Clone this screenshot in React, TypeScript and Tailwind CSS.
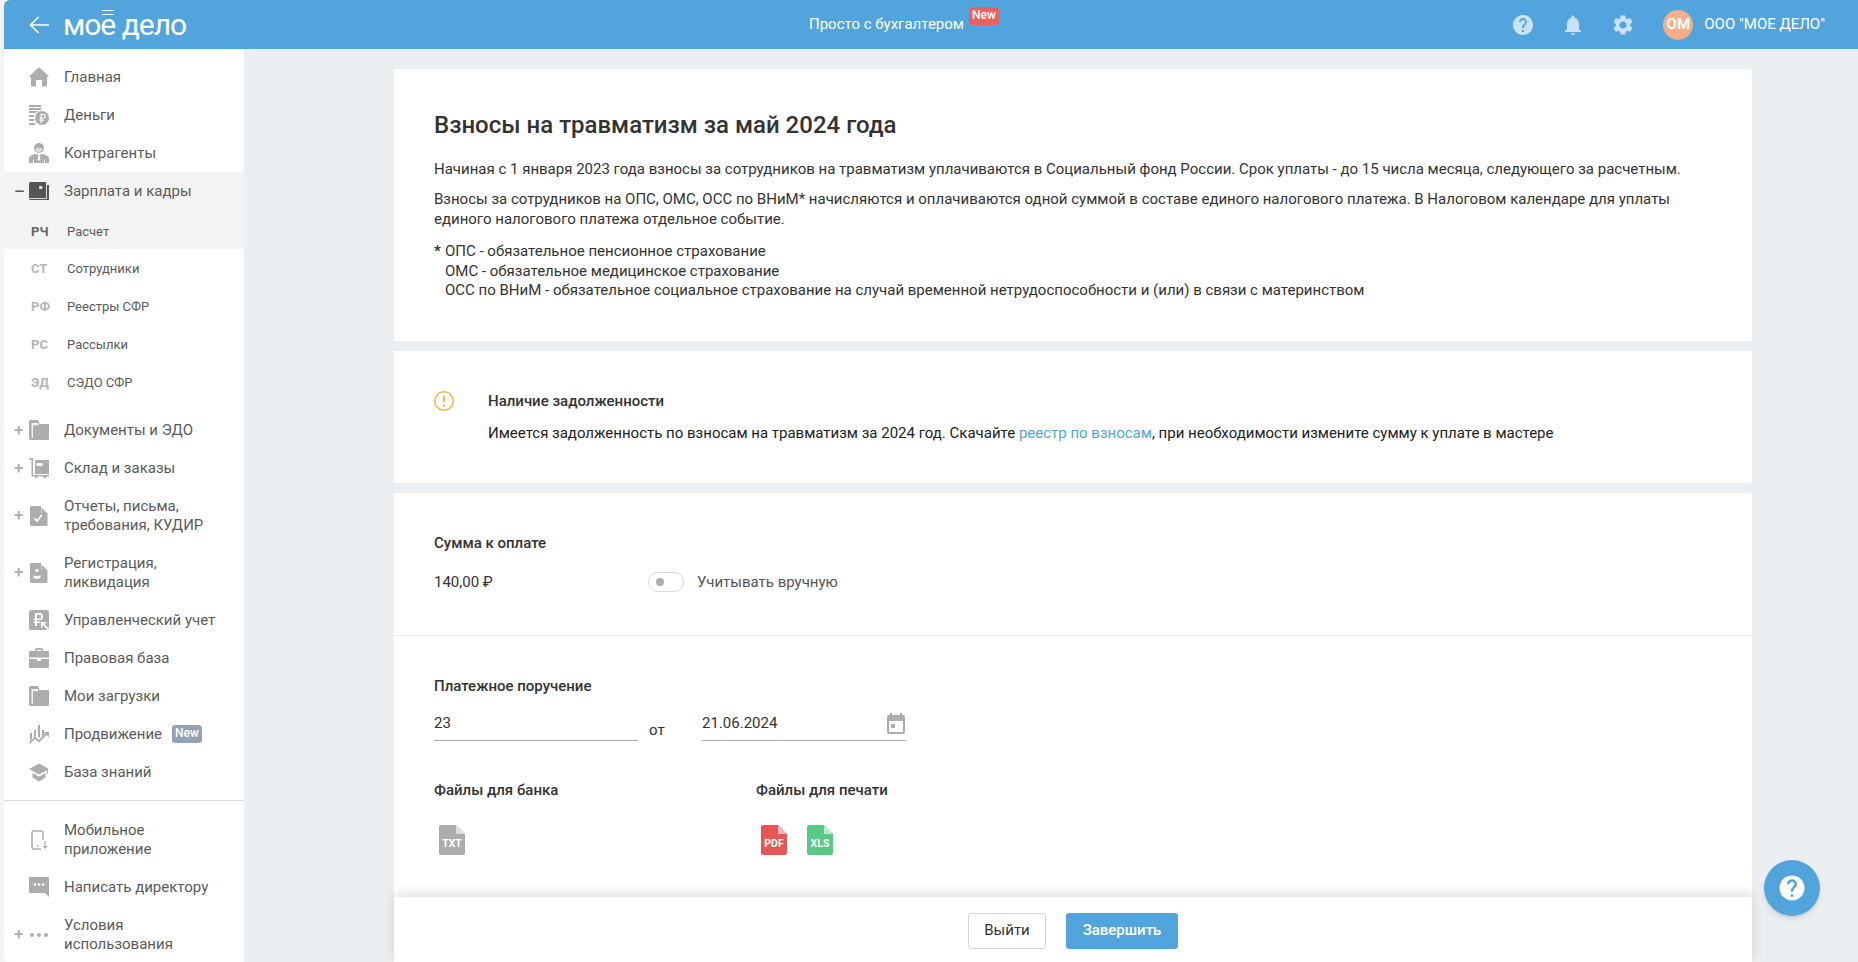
import React from 'react';

const gray = '#adadad';

const Ico = ({ children, size = 20, color = gray }: { children: React.ReactNode; size?: number; color?: string }) => (
  <svg width={size} height={size} viewBox="0 0 20 20" fill={color}>
    {children}
  </svg>
);

const HomeIcon = () => (
  <Ico><path d="M9 1a1.500 1.500 0 0 1 2 0l8.500 8a.6.6 0 0 1-.4 1H18v8.500a1 1 0 0 1-1 1h-4V13H7v6.500H3a1 1 0 0 1-1-1V10H.9a.6.6 0 0 1-.4-1z" /></Ico>
);
const MoneyIcon = () => (
  <Ico>
    <path d="M0 0h12v2H0zM0 3h12v2H0zM0 6h9v2H0zM0 10h5v2H0zM0 14h5v2H0zM0 18h6v2H0z" />
    <circle cx="13" cy="13" r="8" fill="#fff" />
    <circle cx="13" cy="13" r="7" />
    <path d="M11.500 9h3.100a2.300 2.300 0 0 1 0 4.600h-2v1h2.500v1.100h-2.500V18h-1.100v-2.300h-1v-1.100h1v-1h-1v-1h1zm1.100 1.100v2.500h1.900a1.250 1.250 0 0 0 0-2.500z" fill="#fff" />
  </Ico>
);
const PersonIcon = () => (
  <Ico>
    <circle cx="10" cy="5" r="5" />
    <path d="M6.300 5.500c1.500-1 6-1 7.400 0-.3 2.500-2 3.500-3.700 3.500S6.600 8 6.300 5.500z" fill="#dcdcdc" />
    <path d="M0 20v-4.500C0 13 3 11.800 7 11l3 1 3-1c4 .8 7 2 7 4.500V20z" />
    <path d="M8.800 12.500h2.400l-.3 1.500.6 3.500H8.500l.6-3.500z" fill="#fff" />
    <path d="M4 16.500h1V20H4zM15 16.500h1V20h-1z" fill="#fff" />
  </Ico>
);
const WalletIcon = () => (
  <Ico color="#555">
    <path d="M1.500 1H17v3h3v15H1.500A1.500 1.500 0 0 1 0 17.500v-15A1.500 1.500 0 0 1 1.500 1z" />
    <rect x="10" y="5" width="3.500" height="3" rx="1.300" fill="#e4e4e4" />
    <path d="M0 17h18v.9H0zM17 4h1v13.500h-1z" fill="#d8d8d8" />
  </Ico>
);
const FolderIcon = () => (
  <Ico>
    <path d="M1.500 0H9l1.500 4H20v14.500a1.500 1.500 0 0 1-1.500 1.500h-17A1.500 1.500 0 0 1 0 18.500v-17A1.500 1.500 0 0 1 1.500 0z" />
    <path d="M2.500 3h6.300l1 2.200H4V18H2.500z" fill="#f2f2f2" />
  </Ico>
);
const StockIcon = () => (
  <Ico>
    <path d="M0 0h4v17h16v1.500h-3V20h-2.500v-1.500h-6V20H6v-1.500H2.500v-17H0z" />
    <path d="M6 2h14v14H6z" />
    <path d="M7.500 5h6v3h-6z" fill="#fff" />
  </Ico>
);
const DocCheckIcon = () => (
  <Ico>
    <path d="M2.500 0H12l6.500 6.500v12a1.500 1.500 0 0 1-1.500 1.500H2.500A1.500 1.500 0 0 1 1 18.500v-17A1.500 1.500 0 0 1 2.500 0z" />
    <path d="M12 0h7v7h-7z" fill="#fff" />
    <path d="M12.500 1.500 18 7h-5.500z" />
    <path d="m5 13 1.200-1.200 2 2 4-5.500 1.300 1-5.300 7z" fill="#fff" />
  </Ico>
);
const DocPersonIcon = () => (
  <Ico>
    <path d="M2.500 0H12l6.500 6.500v12a1.500 1.500 0 0 1-1.500 1.500H2.500A1.500 1.500 0 0 1 1 18.500v-17A1.500 1.500 0 0 1 2.500 0z" />
    <path d="M12 0h7v7h-7z" fill="#fff" />
    <path d="M12.500 1.500 18 7h-5.500z" />
    <circle cx="8" cy="7.500" r="1.700" fill="#fff" />
    <path d="M4.500 12c1 .8 2 1.200 3.500 1.200s2.500-.4 3.500-1.200v2.800c-1 .7-2 1-3.500 1s-2.500-.3-3.500-1z" fill="#fff" />
  </Ico>
);
const RubleBoxIcon = () => (
  <Ico>
    <rect width="20" height="20" rx="2.500" />
    <path d="M6 3h4.500a3.500 3.500 0 0 1 0 7H8v1.500h3.500V13H8v3H6v-3H4.500v-1.500H6V10H4.500V8.500H6zm2 1.700v3.800h2.500a1.900 1.900 0 0 0 0-3.800z" fill="#fff" />
    <path d="M12 12h5.500v1.500h-3l5.500 5-1.500 1.500-5-5.300v3H12z" fill="#fff" />
  </Ico>
);
const CaseIcon = () => (
  <Ico>
    <path d="M6 1.500A1.500 1.500 0 0 1 7.500 0h5A1.500 1.500 0 0 1 14 1.500V3h-1.700V1.700H7.700V3H6z" />
    <path d="M1 3h18a1 1 0 0 1 1 1v5.500H0V4a1 1 0 0 1 1-1zM0 11h8v2h4v-2h8v8a1 1 0 0 1-1 1H1a1 1 0 0 1-1-1z" />
  </Ico>
);
const ChartIcon = () => (
  <Ico>
    <path d="M1 9h2v6l-2 2zM5 6h2v6.500l-2 1.500zM9 1h2v13l-2-1.500zM13 6h2v5l-2 2z" />
    <path d="M0 18.500 6 12.500l4 3.500L16 9.500 14.500 8H20v5.500L17.500 11 10 18.500l-4-3.500L1 20z" />
  </Ico>
);
const CapIcon = () => (
  <Ico>
    <path d="M10 1.500 20 7l-1 .6V12h-1V8.200L10 12.500 0 7z" />
    <path d="M3.500 11 10 14.500l6.500-3.500v4.500L10 19.500l-6.500-4z" />
  </Ico>
);
const PhoneIcon = () => (
  <Ico>
    <rect x="3" y="1" width="11" height="18" rx="2" fill="none" stroke={gray} strokeWidth="1.500" />
    <rect x="12" y="10" width="8" height="10" fill="#fff" />
    <path d="M15.500 11h1.200v5h2l-2.600 3-2.600-3h2zM8 15h1.500v1.500H8z" />
  </Ico>
);
const ChatIcon = () => (
  <Ico>
    <path d="M1 0h18a1 1 0 0 1 1 1v19l-4-4H1a1 1 0 0 1-1-1V1a1 1 0 0 1 1-1z" />
    <circle cx="6" cy="7.500" r="1.300" fill="#fff" />
    <circle cx="10" cy="7.500" r="1.300" fill="#fff" />
    <circle cx="14" cy="7.500" r="1.300" fill="#fff" />
  </Ico>
);
const DotsIcon = () => (
  <Ico>
    <circle cx="3" cy="10" r="2" />
    <circle cx="10" cy="10" r="2" />
    <circle cx="17" cy="10" r="2" />
  </Ico>
);

const HelpPath = 'M12 2C6.480 2 2 6.480 2 12s4.480 10 10 10 10-4.480 10-10S17.520 2 12 2zm1 17h-2v-2h2v2zm2.070-7.750-.9.920C13.450 12.900 13 13.500 13 15h-2v-.5c0-1.100.450-2.100 1.170-2.830l1.240-1.260c.370-.360.590-.860.590-1.410 0-1.100-.9-2-2-2s-2 .9-2 2H8c0-2.210 1.790-4 4-4s4 1.790 4 4c0 .880-.360 1.680-.930 2.250z';
const BellPath = 'M12 22c1.100 0 2-.9 2-2h-4c0 1.100.890 2 2 2zm6-6v-5c0-3.070-1.640-5.640-4.500-6.320V4c0-.830-.670-1.500-1.500-1.500s-1.500.670-1.500 1.500v.680C7.630 5.360 6 7.920 6 11v5l-2 2v1h16v-1l-2-2z';
const GearPath = 'M19.140 12.940c.040-.3.060-.610.060-.940 0-.320-.020-.640-.070-.940l2.030-1.580c.180-.140.230-.410.120-.610l-1.920-3.320c-.120-.220-.370-.290-.590-.220l-2.390.960c-.5-.380-1.030-.7-1.620-.940l-.360-2.540c-.040-.240-.240-.410-.480-.410h-3.840c-.240 0-.430.170-.470.410l-.360 2.540c-.590.240-1.130.570-1.620.940l-2.390-.960c-.220-.080-.470 0-.590.220L2.740 8.870c-.120.210-.080.470.120.610l2.030 1.580c-.050.3-.090.630-.090.940s.020.640.070.940l-2.030 1.580c-.180.140-.230.410-.120.610l1.920 3.320c.120.220.370.290.590.220l2.390-.960c.5.380 1.030.7 1.620.940l.360 2.540c.050.240.240.410.480.410h3.840c.240 0 .440-.170.470-.410l.360-2.540c.590-.240 1.130-.560 1.620-.940l2.390.960c.220.080.470 0 .590-.220l1.920-3.320c.120-.220.070-.470-.120-.610l-2.010-1.580zM12 15.600c-1.980 0-3.600-1.620-3.600-3.600s1.620-3.600 3.600-3.600 3.600 1.620 3.600 3.600-1.620 3.600-3.600 3.600z';

const MenuRow = ({
  icon,
  label,
  sign,
  tall,
  badge,
  dark,
}: {
  icon: React.ReactNode;
  label: React.ReactNode;
  sign?: string;
  tall?: boolean;
  badge?: boolean;
  dark?: boolean;
}) => (
  <div className={`flex items-center ${tall ? 'h-[57px]' : 'h-[38px]'}`}>
    <div className={`w-[25px] pl-[10px] text-[17px] leading-none font-medium ${dark ? 'text-[#555]' : 'text-[#adadad]'}`}>{sign}</div>
    <div className="w-[20px] h-[20px] flex items-center justify-center">{icon}</div>
    <div className="ml-[15px] text-[15px] leading-[19px] text-[#5b5b5b]">{label}</div>
    {badge && (
      <span className="ml-[10px] h-[18px] w-[30px] text-center rounded-[3px] bg-[#93a3b5] text-white text-[12px] font-medium leading-[17px]">
        New
      </span>
    )}
  </div>
);

const SubRow = ({ abbr, label, active }: { abbr: string; label: string; active?: boolean }) => (
  <div className={`flex items-center pl-[27px] ${active ? 'h-[39px] pt-[4px]' : 'h-[38px] pt-[2px]'}`}>
    <div className={`w-[36px] text-[13px] font-bold ${active ? 'text-[#666]' : 'text-[#b5b5b5]'}`}>{abbr}</div>
    <div className="text-[13px] text-[#5b5b5b]">{label}</div>
  </div>
);

const Sidebar = () => (
  <aside className="w-[240px] ml-[4px] shrink-0 bg-white rounded-bl-[6px] pt-[9px] overflow-hidden">
    <MenuRow icon={<HomeIcon />} label="Главная" />
    <MenuRow icon={<MoneyIcon />} label="Деньги" />
    <MenuRow icon={<PersonIcon />} label="Контрагенты" />
    <div className="bg-[#f3f3f3] h-[77px]">
      <MenuRow icon={<WalletIcon />} sign="–" dark label="Зарплата и кадры" />
      <SubRow abbr="РЧ" label="Расчет" active />
    </div>
    <SubRow abbr="СТ" label="Сотрудники" />
    <SubRow abbr="РФ" label="Реестры СФР" />
    <SubRow abbr="РС" label="Рассылки" />
    <SubRow abbr="ЭД" label="СЭДО СФР" />
    <div className="h-[10px]" />
    <MenuRow icon={<FolderIcon />} sign="+" label="Документы и ЭДО" />
    <MenuRow icon={<StockIcon />} sign="+" label="Склад и заказы" />
    <MenuRow icon={<DocCheckIcon />} sign="+" tall label={<>Отчеты, письма,<br />требования, КУДИР</>} />
    <MenuRow icon={<DocPersonIcon />} sign="+" tall label={<>Регистрация,<br />ликвидация</>} />
    <MenuRow icon={<RubleBoxIcon />} label="Управленческий учет" />
    <MenuRow icon={<CaseIcon />} label="Правовая база" />
    <MenuRow icon={<FolderIcon />} label="Мои загрузки" />
    <MenuRow icon={<ChartIcon />} label="Продвижение" badge />
    <MenuRow icon={<CapIcon />} label="База знаний" />
    <div className="mt-[9px] mb-[10px] border-t border-[#d9d9d9]" />
    <MenuRow icon={<PhoneIcon />} tall label={<>Мобильное<br />приложение</>} />
    <MenuRow icon={<ChatIcon />} label="Написать директору" />
    <MenuRow icon={<DotsIcon />} sign="+" tall label={<>Условия<br />использования</>} />
  </aside>
);

const Header = () => (
  <header className="h-[49px] ml-[4px] shrink-0 bg-[#52a5dc] rounded-tl-[6px] flex items-center text-white">
    <svg className="ml-[25px]" width="20" height="20" viewBox="0 0 20 20" fill="none" stroke="#fff" strokeWidth="1.600">
      <path d="M20 10H1.500M9.500 2 1.500 10l8 8" />
    </svg>
    <div className="ml-[14px] w-[122px] text-[30px] leading-none tracking-[-1px] whitespace-nowrap relative">
      <span className="relative">
        мое
        <span className="absolute right-[1px] top-[3px] w-[12px] h-[5px] border-y border-white" />
      </span>{' '}
      дело
    </div>
    <div className="ml-[624px] text-[15px]">Просто с бухгалтером</div>
    <span className="ml-[5px] -mt-[18px] h-[18px] w-[30px] text-center rounded-[3px] bg-[#ea6060] text-[12px] leading-[17px] font-medium">New</span>
    <div className="ml-auto flex items-center">
      <svg width="24" height="24" viewBox="0 0 24 24" fill="#c9e2f6"><path d={HelpPath} /></svg>
      <svg className="ml-[26px]" width="24" height="24" viewBox="0 0 24 24" fill="#c9e2f6"><path d={BellPath} /></svg>
      <svg className="ml-[26px]" width="24" height="24" viewBox="0 0 24 24" fill="#c9e2f6"><path d={GearPath} /></svg>
      <div className="ml-[28px] w-[30px] h-[30px] rounded-full bg-[#f4ae8a] flex items-center justify-center text-[15px] font-bold">ОМ</div>
      <div className="ml-[11px] mr-[33px] text-[15px]">ООО "МОЕ ДЕЛО"</div>
    </div>
  </header>
);

const FileIcon = ({ color, light, label }: { color: string; light: string; label: string }) => (
  <svg width="26" height="30" viewBox="0 0 26 30">
    <path d="M2 0h15l9 9v19a2 2 0 0 1-2 2H2a2 2 0 0 1-2-2V2a2 2 0 0 1 2-2z" fill={color} />
    <path d="M17 0l9 9h-9z" fill={light} />
    <text x="13" y="22" textAnchor="middle" fontSize="10.500" fontWeight="700" fill="#fff" fontFamily="Roboto">{label}</text>
  </svg>
);

const Field = ({ value, children }: { value: string; children?: React.ReactNode }) => (
  <div className="w-[204px] h-[35px] border-b-[1.500px] border-[#adadad] flex items-start justify-between pt-[7px] text-[15px] text-[#333]">
    <span className="leading-[20px]">{value}</span>
    {children}
  </div>
);

const Main = () => (
  <main className="flex-1 relative min-w-0 bg-[#ebeff2] pl-[150px] pr-[106px] pt-[20px] flex flex-col gap-[10px] text-[#333]">
    <section className="bg-white h-[272px] px-[40px] pt-[42px] shrink-0">
      <h1 className="text-[24px] leading-[28px] font-medium">Взносы на травматизм за май 2024 года</h1>
      <p className="mt-[20px] text-[15px] leading-[20px]">
        Начиная с 1 января 2023 года взносы за сотрудников на травматизм уплачиваются в Социальный фонд России. Срок уплаты - до 15 числа месяца, следующего за расчетным.
      </p>
      <p className="mt-[10px] text-[15px] leading-[20px]">
        Взносы за сотрудников на ОПС, ОМС, ОСС по ВНиМ* начисляются и оплачиваются одной суммой в составе единого налогового платежа. В Налоговом календаре для уплаты единого налогового платежа отдельное событие.
      </p>
      <div className="mt-[13px] text-[15px] leading-[19.500px] flex">
        <span className="w-[11px] font-bold">*</span>
        <div>
          ОПС - обязательное пенсионное страхование
          <br />
          ОМС - обязательное медицинское страхование
          <br />
          ОСС по ВНиМ - обязательное социальное страхование на случай временной нетрудоспособности и (или) в связи с материнством
        </div>
      </div>
    </section>

    <section className="bg-white h-[132px] px-[40px] pt-[40px] shrink-0 flex">
      <svg className="shrink-0" width="20" height="20" viewBox="0 0 20 20" fill="none">
        <circle cx="10" cy="10" r="9.200" stroke="#f5b04c" strokeWidth="1.500" />
        <path d="M10 4.500v7" stroke="#f5b04c" strokeWidth="1.800" />
        <path d="M10 13.500v2" stroke="#f5b04c" strokeWidth="1.800" />
      </svg>
      <div className="ml-[34px] text-[15px] leading-[20px]">
        <div className="font-medium">Наличие задолженности</div>
        <div className="mt-[12px] text-[#222]">
          Имеется задолженность по взносам на травматизм за 2024 год. Скачайте{' '}
          <span className="text-[#52a5dc]">реестр по взносам</span>, при необходимости измените сумму к уплате в мастере
        </div>
      </div>
    </section>

    <section className="bg-white flex-1 min-h-0">
      <div className="h-[143px] px-[40px] pt-[40px] border-b border-[#ececec]">
        <div className="text-[15px] leading-[20px] font-medium">Сумма к оплате</div>
        <div className="mt-[18px] flex items-center">
          <span className="w-[214px] text-[15px] leading-[20px]">140,00 ₽</span>
          <div className="w-[36px] h-[20px] rounded-full border border-[#d9d9d9] flex items-center pl-[7px]">
            <div className="w-[8px] h-[8px] rounded-full bg-[#adadad]" />
          </div>
          <span className="ml-[13px] text-[15px] text-[#555]">Учитывать вручную</span>
        </div>
      </div>
      <div className="px-[40px] pt-[40px]">
        <div className="text-[15px] leading-[20px] font-medium">Платежное поручение</div>
        <div className="mt-[10px] flex items-end">
          <Field value="23" />
          <span className="ml-[11px] w-[53px] text-[15px] leading-[20px] mb-[1px]">от</span>
          <Field value="21.06.2024">
            <svg className="mr-[1px]" width="18" height="21" viewBox="0 0 18 21" fill="#adadad">
              <path d="M3 0h2v2h8V0h2v2h1a2 2 0 0 1 2 2v15a2 2 0 0 1-2 2H2a2 2 0 0 1-2-2V4a2 2 0 0 1 2-2h1zM2 8v11h14V8z" />
              <path d="M4 11h4v4H4z" />
            </svg>
          </Field>
        </div>
        <div className="mt-[39px] flex">
          <div className="w-[322px]">
            <div className="text-[15px] leading-[20px] font-medium">Файлы для банка</div>
            <div className="mt-[25px] ml-[5px] flex">
              <FileIcon color="#adadad" light="#dedede" label="TXT" />
            </div>
          </div>
          <div>
            <div className="text-[15px] leading-[20px] font-medium">Файлы для печати</div>
            <div className="mt-[25px] ml-[5px] flex gap-[20px]">
              <FileIcon color="#e85555" light="#f6b3b3" label="PDF" />
              <FileIcon color="#5ac985" light="#bde9ce" label="XLS" />
            </div>
          </div>
        </div>
      </div>
    </section>

    <div className="absolute left-[150px] right-[106px] bottom-0 h-[65px] bg-white shadow-[0_-4px_12px_rgba(0,0,0,0.12)] flex items-center justify-center gap-[20px] pt-[2px]">
      <button className="w-[78px] h-[36px] rounded-[3px] border border-[#d4d4d4] bg-white text-[15px] text-[#333]">Выйти</button>
      <button className="w-[112px] h-[36px] rounded-[3px] bg-[#52a5dc] text-[15px] font-medium text-white">Завершить</button>
    </div>

    <div className="absolute right-[38px] bottom-[46px] w-[56px] h-[56px] rounded-full bg-[#52a5dc] shadow-md flex items-center justify-center">
      <svg width="30" height="30" viewBox="0 0 24 24">
        <circle cx="12" cy="12" r="10" fill="#fff" />
        <path d="M13 19h-2v-2h2zm2.070-7.750-.9.920C13.450 12.900 13 13.500 13 15h-2v-.5c0-1.100.450-2.100 1.170-2.830l1.240-1.260c.370-.360.590-.860.590-1.410 0-1.100-.9-2-2-2s-2 .9-2 2H8c0-2.210 1.790-4 4-4s4 1.790 4 4c0 .880-.360 1.680-.930 2.250z" fill="#52a5dc" />
      </svg>
    </div>
  </main>
);

export default function App() {
  return (
    <div className="h-screen w-full overflow-hidden flex flex-col bg-[#f4f4f4] font-['Roboto',sans-serif]">
      <Header />
      <div className="flex flex-1 min-h-0">
        <Sidebar />
        <Main />
      </div>
    </div>
  );
}
